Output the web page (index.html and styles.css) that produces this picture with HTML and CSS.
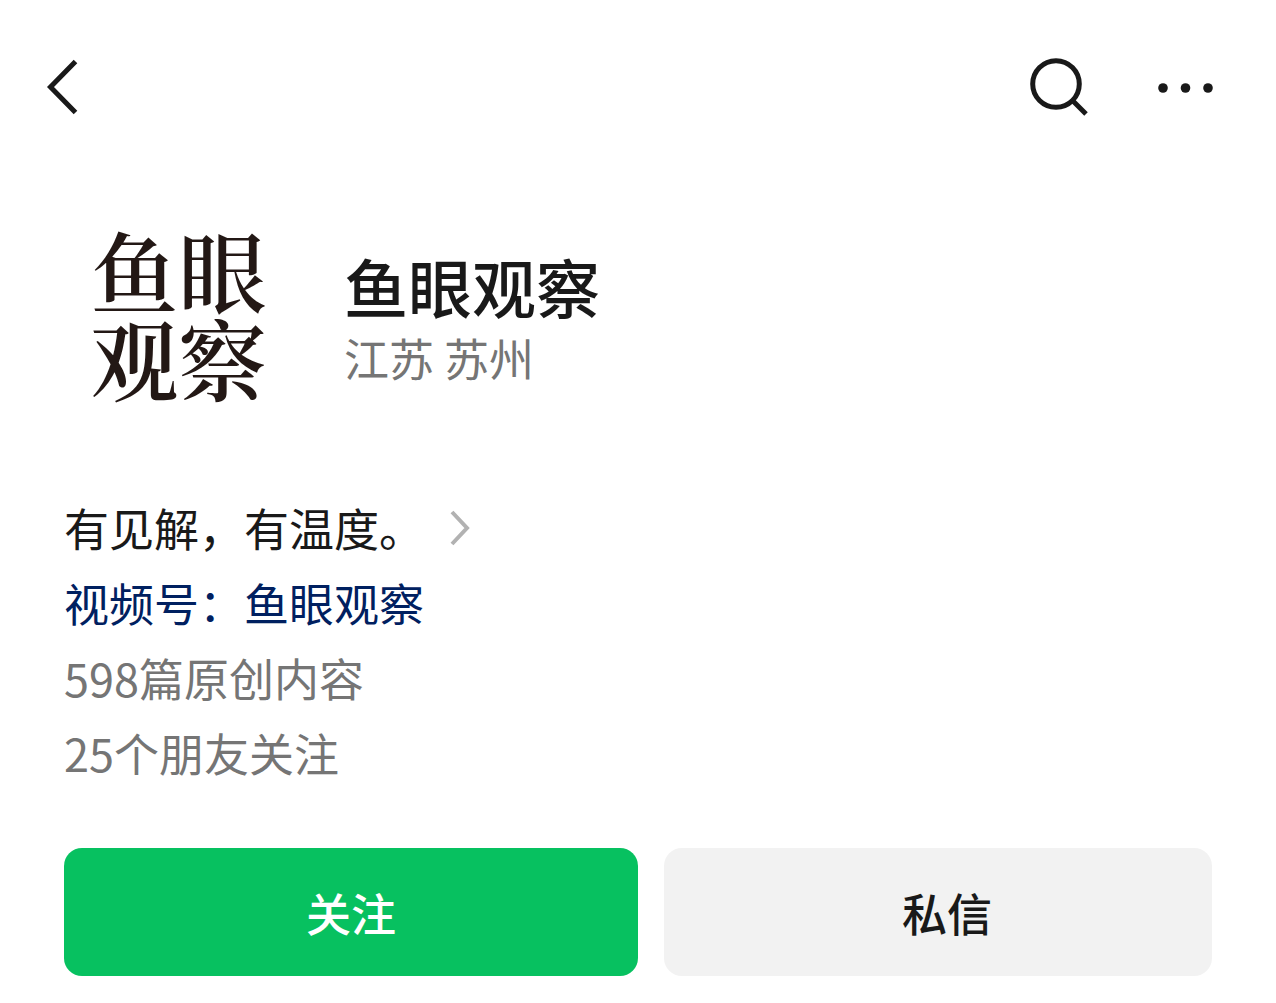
FILE: index.html
```html
<!DOCTYPE html>
<html lang="zh-CN">
<head>
    <meta charset="UTF-8">
    <meta name="viewport" content="width=device-width, initial-scale=1.0">
    <title>鱼眼观察</title>
    <link rel="stylesheet" href="styles.css">
</head>
<body>
    <header class="topbar">
        <button type="button" class="icon-btn" aria-label="返回">
            <svg width="32" height="56" viewBox="0 0 32 56"><path d="M29.5 2.5 L4.5 28 L29.5 53.5"/></svg>
        </button>
        <div class="topbar-actions">
            <button type="button" class="icon-btn" aria-label="搜索">
                <svg width="60" height="60" viewBox="0 0 60 60"><circle cx="27" cy="27" r="23.3"/><path d="M43 43 L57 57"/></svg>
            </button>
            <button type="button" class="icon-btn" aria-label="更多">
                <svg class="dots" width="56" height="12" viewBox="0 0 56 12"><circle cx="6" cy="7" r="4.8"/><circle cx="28.5" cy="7" r="4.8"/><circle cx="51" cy="7" r="4.8"/></svg>
            </button>
        </div>
    </header>

    <main>
        <section class="profile">
            <div class="avatar">鱼眼<br>观察</div>
            <div>
                <h1>鱼眼观察</h1>
                <p class="location">江苏 苏州</p>
            </div>
        </section>

        <section class="info">
            <a href="#" class="intro">有见解，有温度。
                <svg width="20" height="36" viewBox="0 0 20 36"><path d="M2 2 L17 18 L2 34"/></svg>
            </a>
            <a href="#" class="channel">视频号：鱼眼观察</a>
            <p>598篇原创内容</p>
            <p>25个朋友关注</p>
        </section>

        <div class="buttons">
            <button type="button" class="btn follow">关注</button>
            <button type="button" class="btn message">私信</button>
        </div>
    </main>
</body>
</html>
```
FILE: styles.css
```css
* {
    box-sizing: border-box;
}
body {
    margin: 0;
    background-color: #ffffff;
    color: #191919;
    font-family: "Noto Sans CJK SC", sans-serif;
}
h1, p {
    margin: 0;
}
button {
    border: none;
    font-family: inherit;
    cursor: pointer;
}
a {
    text-decoration: none;
}
svg {
    display: block;
    fill: none;
    stroke: #191919;
    stroke-width: 5;
}
.topbar {
    display: flex;
    justify-content: space-between;
    align-items: center;
    height: 174px;
    padding: 0 63px 0 46px;
}
.topbar-actions {
    display: flex;
    align-items: center;
    gap: 68px;
}
.icon-btn {
    padding: 0;
    background: none;
}
.dots {
    fill: #191919;
    stroke: none;
}
.profile {
    display: flex;
    align-items: flex-start;
    gap: 51px;
    padding: 50px 64px 0;
}
.avatar {
    width: 229px;
    color: #231815;
    font-family: "Noto Serif CJK SC", "Noto Sans CJK SC", serif;
    font-size: 88px;
    font-weight: 600;
    line-height: 88px;
    text-align: center;
}
h1 {
    padding-top: 20px;
    font-size: 64px;
    font-weight: 500;
    line-height: 82px;
}
.location {
    color: #757575;
    font-size: 45px;
    line-height: 64px;
}
.info {
    display: flex;
    flex-direction: column;
    align-items: flex-start;
    padding: 90px 64px 0;
    color: #757575;
    font-size: 45px;
    line-height: 75px;
}
.intro {
    display: flex;
    align-items: center;
    gap: 26px;
    color: #191919;
}
.intro svg {
    stroke: #b2b2b2;
    stroke-width: 4;
}
.channel {
    color: #002060;
}
.buttons {
    display: grid;
    grid-template-columns: 574fr 548fr;
    gap: 26px;
    padding: 58px 64px 27px;
}
.btn {
    height: 128px;
    border-radius: 18px;
    font-size: 45px;
    font-weight: 500;
}
.follow {
    background-color: #07c160;
    color: #ffffff;
}
.message {
    padding: 0 0 0 18px;
    background-color: #f2f2f2;
    color: #191919;
}
```
